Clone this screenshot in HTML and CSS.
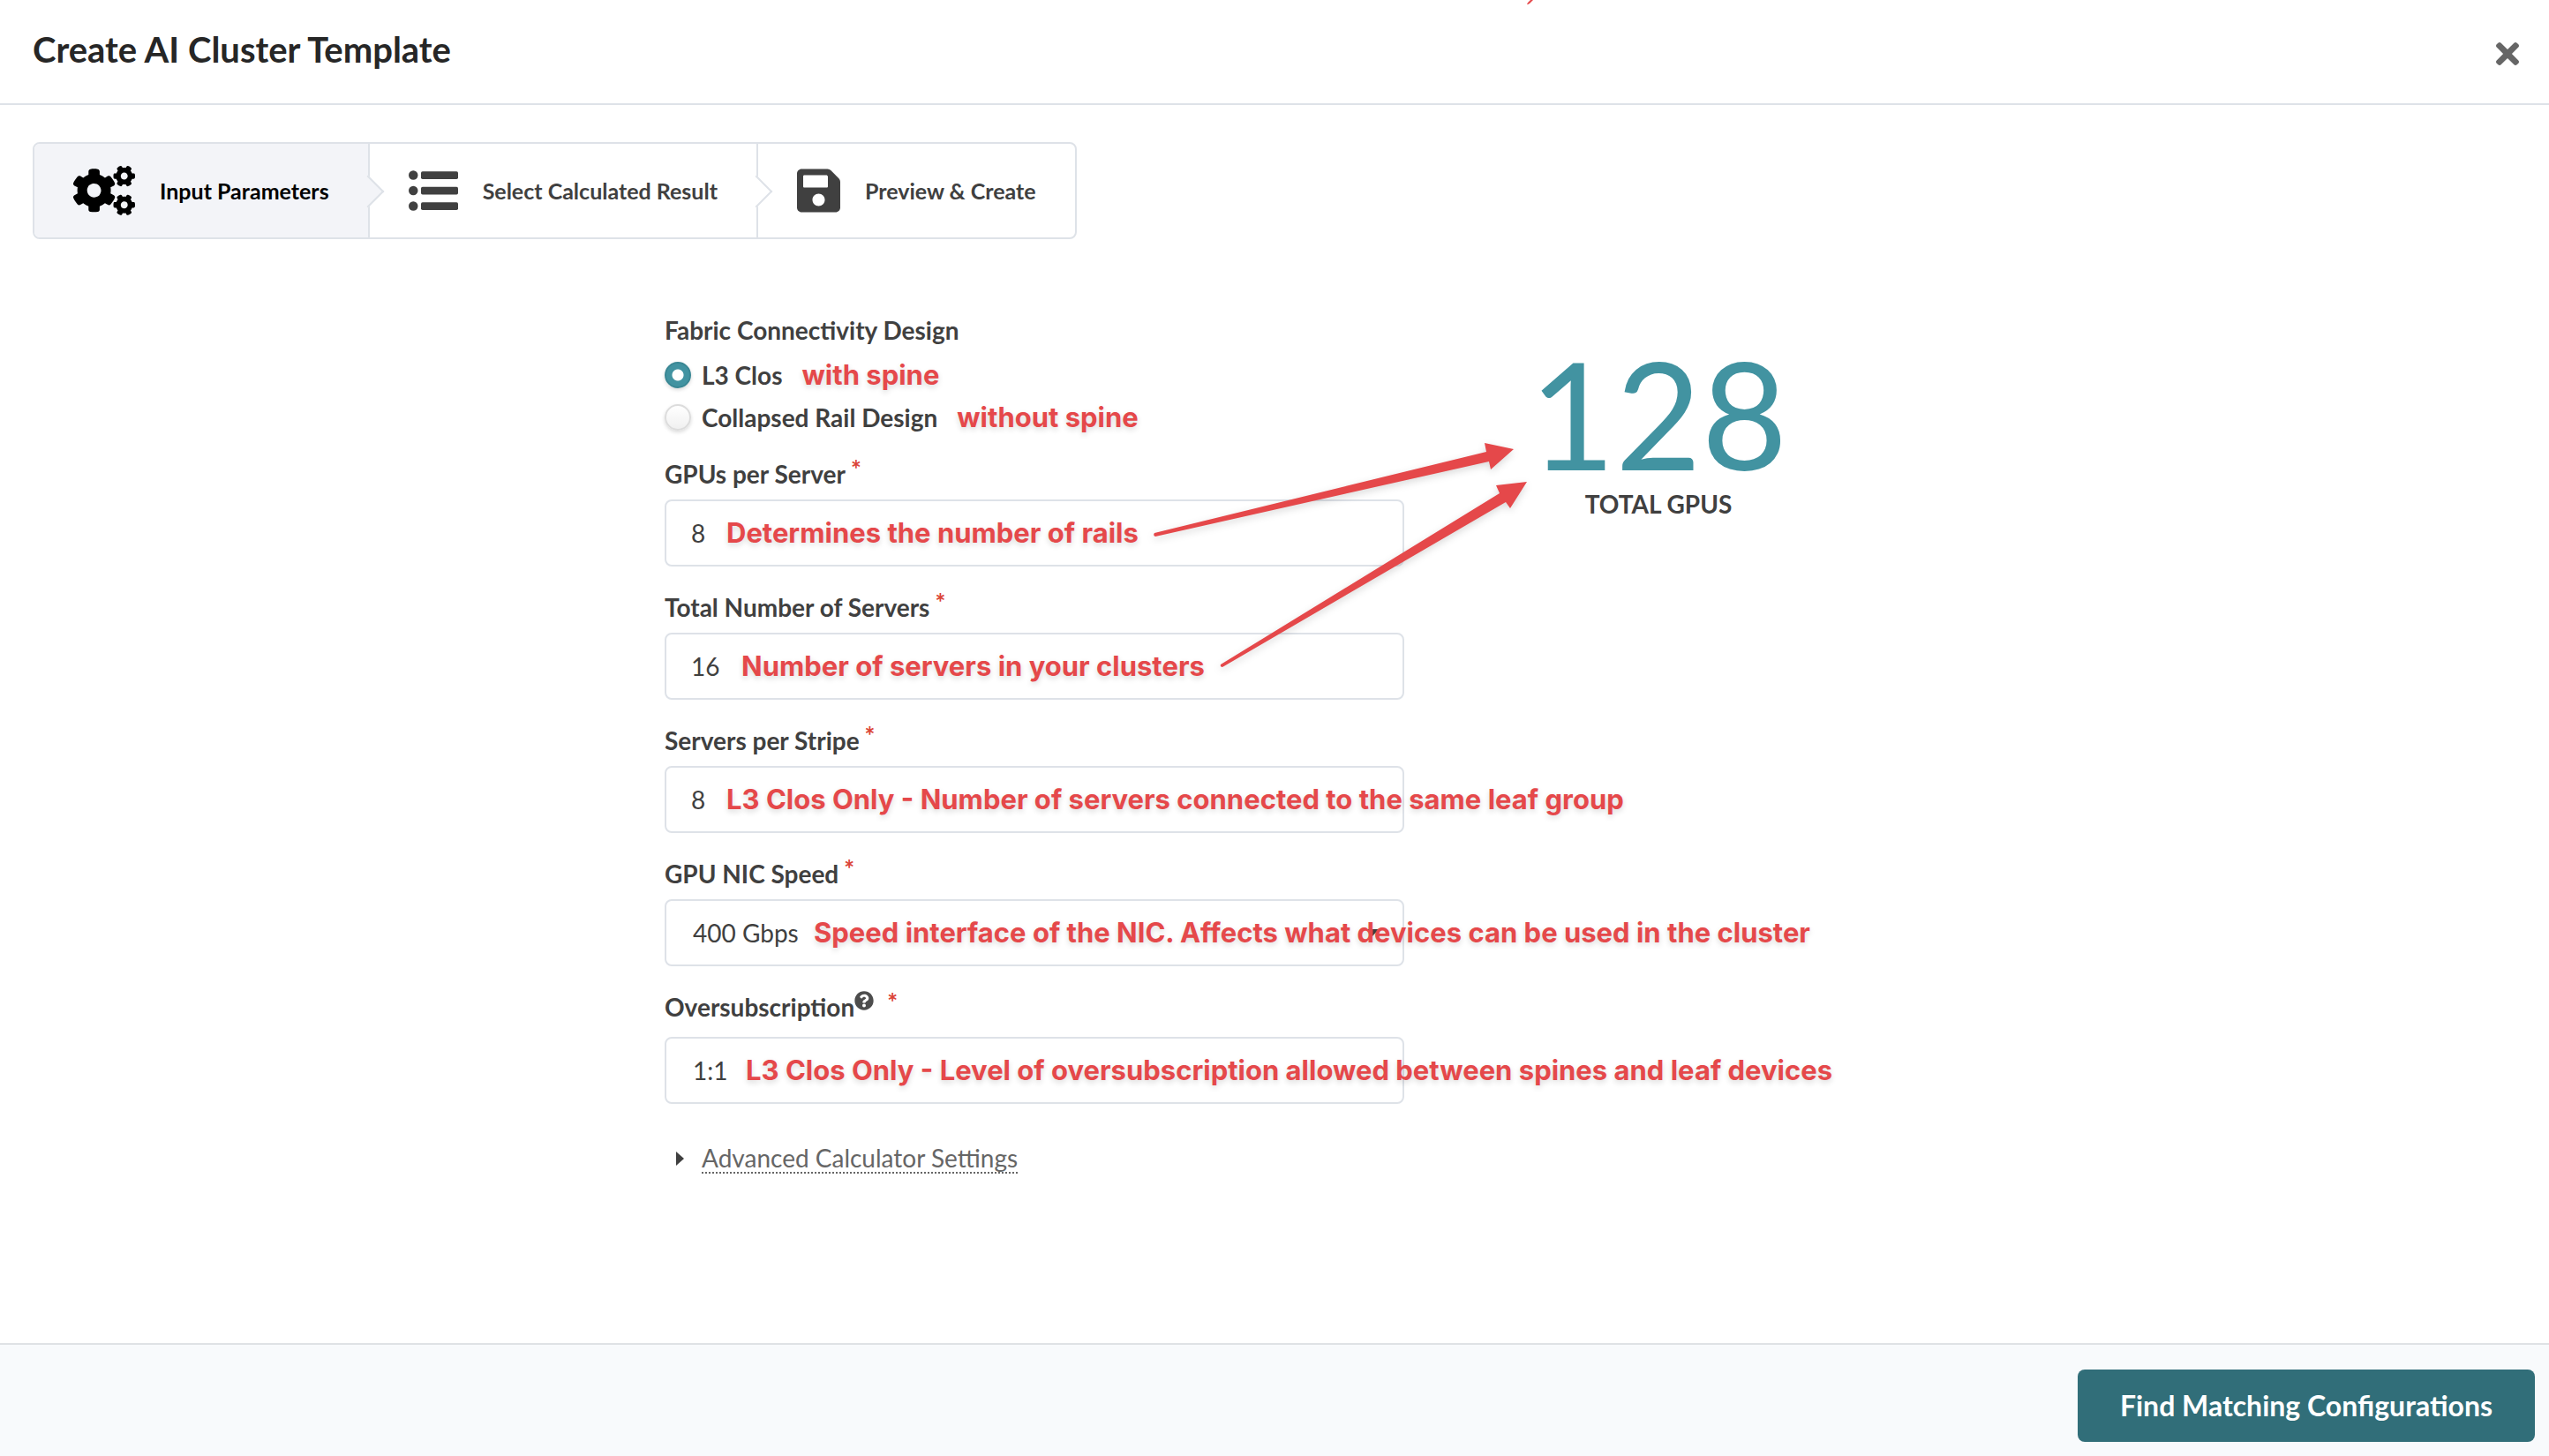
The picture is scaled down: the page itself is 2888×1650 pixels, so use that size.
FILE: index.html
```html
<!doctype html>
<html lang="en">
<head>
    <meta charset="UTF-8">
    <title>Create AI Cluster Template</title>
    <link rel="stylesheet" href="styles.css">
</head>
<body>
<div class="modal">
    <header class="header">
        <h1>Create AI Cluster Template</h1>
        <button type="button" class="close" aria-label="Close">
            <svg viewBox="0 80 352 352"><path d="M242.72 256l100.07-100.07c12.28-12.28 12.28-32.19 0-44.48l-22.24-22.24c-12.28-12.28-32.19-12.28-44.48 0L176 189.28 75.93 89.21c-12.28-12.28-32.19-12.28-44.48 0L9.21 111.45c-12.28 12.28-12.28 32.19 0 44.48L109.28 256 9.21 356.07c-12.28 12.28-12.28 32.19 0 44.48l22.24 22.24c12.28 12.28 32.2 12.28 44.48 0L176 322.72l100.07 100.07c12.28 12.28 32.2 12.28 44.48 0l22.24-22.24c12.28-12.28 12.28-32.19 0-44.48L242.72 256z"/></svg>
        </button>
        <svg class="top-mark" viewBox="0 0 8 6"><path d="M0 5L1 3L4 0H7L3 4L1 5Z"/></svg>
    </header>

    <main class="content">
        <ol class="steps">
            <li class="step active">
                <svg viewBox="0 0 640 512" class="icon-cogs"><path d="M512.1 191l-8.2 14.3c-3 5.3-9.4 7.5-15.1 5.4-11.8-4.4-22.6-10.7-32.1-18.6-4.6-3.8-5.8-10.5-2.8-15.7l8.2-14.3c-6.9-8-12.3-17.3-15.9-27.4h-16.5c-6 0-11.2-4.3-12.2-10.3-2-12-2.1-24.6 0-37.1 1-6 6.2-10.4 12.2-10.4h16.5c3.6-10.1 9-19.4 15.9-27.4l-8.2-14.3c-3-5.2-1.9-11.9 2.8-15.7 9.5-7.9 20.4-14.2 32.1-18.6 5.7-2.1 12.1.1 15.1 5.4l8.2 14.3c10.5-1.9 21.2-1.9 31.7 0L552 6.3c3-5.3 9.4-7.5 15.1-5.4 11.8 4.4 22.6 10.7 32.1 18.6 4.6 3.8 5.8 10.5 2.8 15.7l-8.2 14.3c6.9 8 12.3 17.3 15.9 27.4h16.5c6 0 11.2 4.3 12.2 10.3 2 12 2.1 24.6 0 37.1-1 6-6.2 10.4-12.2 10.4h-16.5c-3.6 10.1-9 19.4-15.9 27.4l8.2 14.3c3 5.2 1.9 11.9-2.8 15.7-9.5 7.9-20.4 14.2-32.1 18.6-5.7 2.1-12.1-.1-15.1-5.4l-8.2-14.3c-10.4 1.9-21.2 1.9-31.7 0zm-10.5-58.8c38.5 29.6 82.4-14.3 52.8-52.8-38.5-29.7-82.4 14.3-52.8 52.8zM386.3 286.1l33.7 16.8c10.1 5.8 14.5 18.1 10.5 29.1-8.9 24.2-26.4 46.4-42.6 65.8-7.4 8.9-20.2 11.1-30.3 5.3l-29.1-16.8c-16 13.7-34.6 24.6-54.9 31.7v33.6c0 11.6-8.3 21.6-19.7 23.6-24.6 4.2-50.4 4.4-75.9 0-11.5-2-20-11.9-20-23.6V418c-20.3-7.2-38.9-18-54.9-31.7L74 403c-10 5.8-22.9 3.6-30.3-5.3-16.2-19.4-33.3-41.6-42.2-65.7-4-10.9.4-23.2 10.5-29.1l33.3-16.8c-3.9-20.9-3.9-42.4 0-63.4L12 205.8c-10.1-5.8-14.6-18.1-10.5-29 8.9-24.2 26-46.4 42.2-65.8 7.4-8.9 20.2-11.1 30.3-5.3l29.1 16.8c16-13.7 34.6-24.6 54.9-31.7V57.1c0-11.5 8.2-21.5 19.6-23.5 24.6-4.2 50.5-4.4 76-.1 11.5 2 20 11.9 20 23.6v33.6c20.3 7.2 38.9 18 54.9 31.7l29.1-16.8c10-5.8 22.9-3.6 30.3 5.3 16.2 19.4 33.2 41.6 42.1 65.8 4 10.9.1 23.2-10 29.1l-33.7 16.8c3.9 21 3.9 42.5 0 63.5zm-117.6 21.1c59.2-77-28.7-164.9-105.7-105.7-59.2 77 28.7 164.9 105.7 105.7zm243.4 182.7l-8.2 14.3c-3 5.3-9.4 7.5-15.1 5.4-11.8-4.4-22.6-10.7-32.1-18.6-4.6-3.8-5.8-10.5-2.8-15.7l8.2-14.3c-6.9-8-12.3-17.3-15.9-27.4h-16.5c-6 0-11.2-4.3-12.2-10.3-2-12-2.1-24.6 0-37.1 1-6 6.2-10.4 12.2-10.4h16.5c3.6-10.1 9-19.4 15.9-27.4l-8.2-14.3c-3-5.2-1.9-11.9 2.8-15.7 9.5-7.9 20.4-14.2 32.1-18.6 5.7-2.1 12.1.1 15.1 5.4l8.2 14.3c10.5-1.9 21.2-1.9 31.7 0l8.2-14.3c3-5.3 9.4-7.5 15.1-5.4 11.8 4.4 22.6 10.7 32.1 18.6 4.6 3.8 5.8 10.5 2.8 15.7l-8.2 14.3c6.9 8 12.3 17.3 15.9 27.4h16.5c6 0 11.2 4.3 12.2 10.3 2 12 2.1 24.6 0 37.1-1 6-6.2 10.4-12.2 10.4h-16.5c-3.6 10.1-9 19.4-15.9 27.4l8.2 14.3c3 5.2 1.9 11.9-2.8 15.7-9.5 7.9-20.4 14.2-32.1 18.6-5.7 2.1-12.1-.1-15.1-5.4l-8.2-14.3c-10.4 1.9-21.2 1.9-31.7 0zM501.6 431c38.5 29.6 82.4-14.3 52.8-52.8-38.5-29.6-82.4 14.3-52.8 52.8z"/></svg>
                <span>Input Parameters</span>
            </li>
            <li class="step">
                <svg viewBox="0 0 512 512" class="icon-list"><circle cx="48" cy="96" r="48"/><circle cx="48" cy="256" r="48"/><circle cx="48" cy="416" r="48"/><rect x="128" y="56" width="384" height="80" rx="16"/><rect x="128" y="216" width="384" height="80" rx="16"/><rect x="128" y="376" width="384" height="80" rx="16"/></svg>
                <span>Select Calculated Result</span>
            </li>
            <li class="step">
                <svg viewBox="0 0 448 512" class="icon-save"><path d="M433.941 129.941l-83.882-83.882A48 48 0 0 0 316.118 32H48C21.49 32 0 53.49 0 80v352c0 26.51 21.49 48 48 48h352c26.51 0 48-21.49 48-48V163.882a48 48 0 0 0-14.059-33.941zM224 416c-35.346 0-64-28.654-64-64 0-35.346 28.654-64 64-64s64 28.654 64 64c0 35.346-28.654 64-64 64zm96-304.52V212c0 6.627-5.373 12-12 12H76c-6.627 0-12-5.373-12-12V108c0-6.627 5.373-12 12-12h228.52c3.183 0 6.235 1.243 8.485 3.493l3.48 3.48A11.996 11.996 0 0 1 320 111.48z"/></svg>
                <span>Preview &amp; Create</span>
            </li>
        </ol>

        <div class="calculator">
            <form class="form" id="calc">
                <fieldset class="design">
                    <legend>Fabric Connectivity Design</legend>
                    <div class="radio">
                        <input type="radio" name="design" id="clos" checked>
                        <label for="clos">L3 Clos</label>
                        <span class="note">with spine</span>
                    </div>
                    <div class="radio">
                        <input type="radio" name="design" id="rail">
                        <label for="rail">Collapsed Rail Design</label>
                        <span class="note">without spine</span>
                    </div>
                </fieldset>
                <div class="field">
                    <label for="gpus" class="required">GPUs per Server</label>
                    <div class="control">
                        <input type="text" id="gpus" value="8">
                        <span class="note after-digit">Determines the number of rails</span>
                    </div>
                </div>
                <div class="field">
                    <label for="servers" class="required">Total Number of Servers</label>
                    <div class="control">
                        <input type="text" id="servers" value="16">
                        <span class="note after-number">Number of servers in your clusters</span>
                    </div>
                </div>
                <div class="field">
                    <label for="stripe" class="required">Servers per Stripe</label>
                    <div class="control">
                        <input type="text" id="stripe" value="8">
                        <span class="note after-digit">L3 Clos Only - Number of servers connected to the same leaf group</span>
                    </div>
                </div>
                <div class="field">
                    <label for="speed" class="required">GPU NIC Speed</label>
                    <div class="control">
                        <select id="speed">
                            <option>400 Gbps</option>
                        </select>
                        <svg class="caret" viewBox="0 0 14 8"><path d="M0 0H14L7 8Z"/></svg>
                        <span class="note after-speed">Speed interface of the NIC. Affects what devices can be used in the cluster</span>
                    </div>
                </div>
                <div class="field">
                    <label for="ratio" class="required with-help">Oversubscription<svg class="help" viewBox="0 0 512 512"><path d="M504 256c0 136.997-111.043 248-248 248S8 392.997 8 256C8 119.083 119.043 8 256 8s248 111.083 248 248zM262.655 90c-54.497 0-89.255 22.957-116.549 63.758-3.536 5.286-2.353 12.415 2.715 16.258l34.699 26.31c5.205 3.947 12.621 3.008 16.665-2.122 17.864-22.658 30.113-35.797 57.303-35.797 20.429 0 45.698 13.148 45.698 32.958 0 14.976-12.363 22.667-32.534 33.976C247.128 238.528 216 254.941 216 296v4c0 6.627 5.373 12 12 12h56c6.627 0 12-5.373 12-12v-1.333c0-28.462 83.186-29.647 83.186-106.667 0-58.002-60.165-102-116.531-102zM256 338c-25.365 0-46 20.635-46 46 0 25.364 20.635 46 46 46s46-20.636 46-46c0-25.365-20.635-46-46-46z"/></svg></label>
                    <div class="control">
                        <select id="ratio">
                            <option>1:1</option>
                        </select>
                        <span class="note after-ratio">L3 Clos Only - Level of oversubscription allowed between spines and leaf devices</span>
                    </div>
                </div>
                <button type="button" class="advanced">
                    <svg viewBox="0 0 9 16"><path d="M0 0L9 8L0 16Z"/></svg>
                    <span>Advanced Calculator Settings</span>
                </button>
            </form>

            <div class="statistic">
                <div class="value">128</div>
                <div class="label">Total GPUs</div>
            </div>

            <!-- arrows from the inputs to the total -->
            <svg class="arrows" viewBox="0 0 430 260">
                <path d="M8 104L384 12L382 2L415 9L389 32L387 23L9 108Q6 107 8 104Z"/>
                <path d="M83 253L399 59L395 50L430 46L411 76L406 69L85 256Q82 256 83 253Z"/>
            </svg>
        </div>
    </main>

    <footer class="footer">
        <button type="submit" form="calc" class="primary">Find Matching Configurations</button>
    </footer>
</div>
</body>
</html>
```
FILE: styles.css
```css
*{
    margin: 0;
    padding: 0;
    box-sizing: border-box;
}
body{
    font-family: Lato, "Liberation Sans", sans-serif;
    font-size: 28px;
    line-height: 36px;
    color: #404040;
    background: #fff;
}
button,input,select{
    font: inherit;
    color: inherit;
}
button{
    border: 0;
    background: none;
    cursor: pointer;
}
svg{
    display: block;
    fill: currentColor;
}
.modal{
    display: flex;
    flex-direction: column;
    min-height: 100vh;
}
.header{
    position: relative;
    display: flex;
    align-items: center;
    justify-content: space-between;
    padding: 32px 34px 37px 37px;
    border-bottom: 2px solid #dee2e8;
}
.header h1{
    font-size: 40px;
    line-height: 48px;
    color: #262626;
}
.close{
    margin-top: 10px;
}
.close svg{
    width: 26px;
    height: 26px;
    color: #666;
}
.top-mark{
    position: absolute;
    top: 0;
    left: 1730px;
    width: 8px;
    height: 6px;
    color: #e5484a;
}
.content{
    flex: 1;
    padding: 42px 37px;
}

/* steps */
.steps{
    display: inline-flex;
    list-style: none;
    border: 2px solid #dee2e8;
    border-radius: 8px;
}
.step{
    position: relative;
    display: flex;
    align-items: center;
    gap: 28px;
    height: 106px;
    padding: 0 44px;
    font-size: 25px;
    font-weight: bold;
    border-right: 2px solid #dee2e8;
}
.step:last-child{
    border-right: 0;
}
.step:not(:last-child)::after{
    content: "";
    position: absolute;
    z-index: 1;
    top: 41px;
    right: -13px;
    width: 24px;
    height: 24px;
    background: #fff;
    border: solid #dee2e8;
    border-width: 2px 2px 0 0;
    transform: rotate(45deg);
}
.step.active,.step.active::after{
    color: #000;
    background: #f3f4f8;
}
.step.active{
    border-radius: 6px 0 0 6px;
}
.step svg{
    height: 56px;
}
.icon-cogs{
    width: 70px;
}
.icon-list{
    width: 56px;
}
.icon-save{
    width: 49px;
}

/* form */
.calculator{
    position: relative;
    display: grid;
    grid-template-columns: 838fr 508fr;
    gap: 36px;
    max-width: 1382px;
    margin: 85px auto 0;
}
.design{
    border: 0;
    margin-bottom: 22px;
}
.design legend{
    font-weight: bold;
    margin-bottom: 9px;
}
.radio{
    display: flex;
    align-items: center;
    height: 48px;
}
.radio input{
    appearance: none;
    width: 30px;
    height: 30px;
    margin-right: 12px;
    border: 2px solid #dcdcdc;
    border-radius: 50%;
    background: linear-gradient(#fff, #f0f0f0);
    box-shadow: 0 2px 4px rgba(0, 0, 0, .15);
}
.radio input:checked{
    border-color: #3a8794;
    background: radial-gradient(circle, #fff 6px, #4293a1 7px);
}
.radio label{
    font-weight: bold;
    margin-right: 22px;
}
.note{
    font-family: Inter, "Liberation Sans", sans-serif;
    font-size: 31px;
    font-weight: 700;
    white-space: nowrap;
    color: #e5484a;
    text-shadow: 0 3px 6px rgba(0, 0, 0, .15);
}
.field{
    margin-bottom: 28px;
}
.field label{
    display: flex;
    font-weight: bold;
    margin-bottom: 11px;
}
.field .with-help{
    margin-bottom: 16px;
}
.required::after{
    content: "*";
    margin: -6px 0 0 6px;
    color: #db4437;
}
.help{
    width: 22px;
    height: 22px;
    margin-right: 9px;
    color: #4d4d4d;
}
.control{
    position: relative;
}
.control input,.control select{
    display: block;
    appearance: none;
    width: 100%;
    height: 76px;
    padding: 0 28px;
    border: 2px solid #dee2e8;
    border-radius: 8px;
    background: #fff;
}
.control select{
    padding: 0 30px;
}
.control .note{
    position: absolute;
    top: 20px;
}
.control .after-digit{
    left: 70px;
}
.control .after-number{
    left: 87px;
}
.control .after-ratio{
    left: 92px;
}
.control .after-speed{
    left: 169px;
}
.caret{
    position: absolute;
    top: 34px;
    right: 29px;
    width: 14px;
    height: 8px;
}
.advanced{
    display: flex;
    align-items: center;
    gap: 20px;
    margin: 45px 0 0 13px;
    color: #666;
}
.advanced svg{
    width: 9px;
    height: 16px;
    color: #404040;
}
.advanced span{
    line-height: 32px;
    border-bottom: 2px dotted #666;
}

/* total */
.statistic{
    padding: 33px 4px 0 0;
    text-align: center;
}
.statistic .value{
    font-size: 168px;
    line-height: 158px;
    color: #4293a1;
}
.statistic .label{
    margin-top: 6px;
    font-weight: bold;
    text-transform: uppercase;
}
.arrows{
    position: absolute;
    top: 144px;
    left: 547px;
    width: 430px;
    height: 260px;
    color: #e5484a;
    filter: drop-shadow(0 3px 4px rgba(0, 0, 0, .15));
}

.footer{
    display: flex;
    justify-content: flex-end;
    padding: 28px 16px 16px;
    background: #f8fafc;
    border-top: 2px solid #dfe2e5;
}
.primary{
    height: 82px;
    padding: 0 48px;
    font-size: 32px;
    font-weight: bold;
    color: #fff;
    background: #316e79;
    border-radius: 8px;
}
```
